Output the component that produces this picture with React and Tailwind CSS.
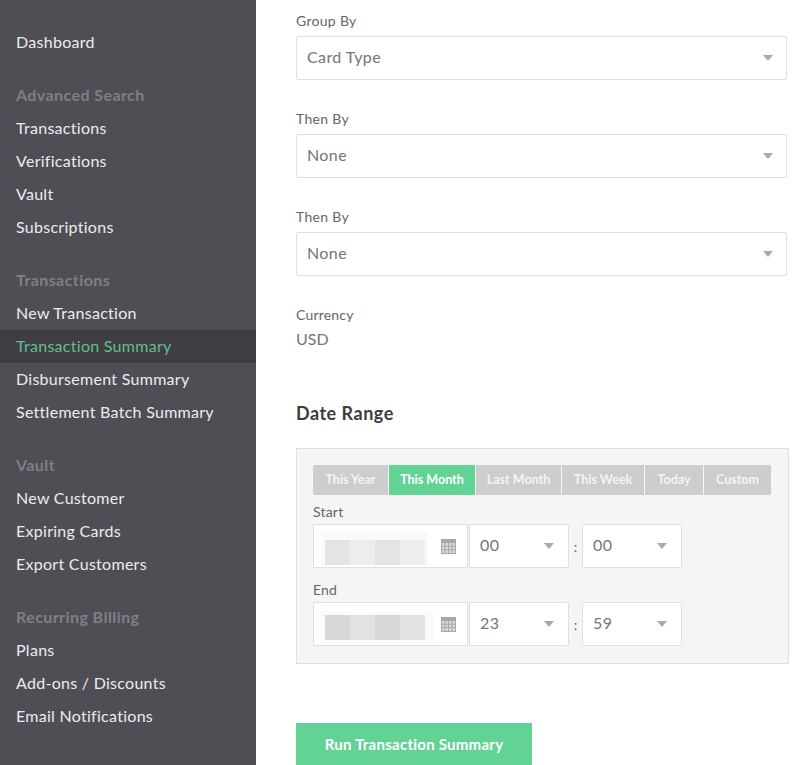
const sections = [
  { items: ['Dashboard'] },
  { title: 'Advanced Search', items: ['Transactions', 'Verifications', 'Vault', 'Subscriptions'] },
  { title: 'Transactions', items: ['New Transaction', 'Transaction Summary', 'Disbursement Summary', 'Settlement Batch Summary'] },
  { title: 'Vault', items: ['New Customer', 'Expiring Cards', 'Export Customers'] },
  { title: 'Recurring Billing', items: ['Plans', 'Add-ons / Discounts', 'Email Notifications'] },
]

const tabs = [
  { label: 'This Year', w: 'w-[75px]' },
  { label: 'This Month', w: 'w-[86px]', active: true },
  { label: 'Last Month', w: 'w-[85px]' },
  { label: 'This Week', w: 'w-[82px]' },
  { label: 'Today', w: 'w-[58px]' },
  { label: 'Custom', w: 'w-[67px]' },
]

function Caret() {
  return <span className="w-0 h-0 border-x-[5px] border-x-transparent border-t-[6px] border-t-[#a9a9a9]" />
}

function Select({ value, className }) {
  return (
    <div className={"h-11 flex items-center justify-between bg-white border border-[#dfdfdf] rounded-[2px] text-[16px] tracking-[0.4px] text-[#757575] " + className}>
      <span className="pb-[2px]">{value}</span>
      <Caret />
    </div>
  )
}

function Field({ label, value }) {
  return (
    <div>
      <div className="h-[24px] leading-[24px] text-[14px] tracking-[0.3px] text-[#666]">{label}</div>
      <Select value={value} className="mt-[3px] pl-[10px] pr-[13px]" />
    </div>
  )
}

function CalendarIcon() {
  return (
    <svg width="15" height="15" viewBox="0 0 15 15" className="shrink-0 self-center">
      <rect width="15" height="15" fill="#a8a8a8" />
      <path d="M1 4h13v10H1z" fill="#d9d9d9" />
      <path d="M4 4v10M7.5 4v10M11 4v10M1 7.2h13M1 10.6h13" stroke="#a8a8a8" strokeWidth="1" />
    </svg>
  )
}

function DateRow({ label, hour, minute, dark }) {
  const a = dark ? 'bg-[#d8d8d8]' : 'bg-[#e4e4e4]'
  const b = dark ? 'bg-[#e2e2e2]' : 'bg-[#ededed]'
  return (
    <div>
      <div className="h-[24px] leading-[24px] text-[14px] tracking-[0.2px] text-[#666]">{label}</div>
      <div className="flex items-center">
        <div className="w-[155px] h-11 bg-white border border-[#dfdfdf] flex items-start justify-between pr-[11px]">
          <div className={"flex bg-[#fafafa] " + (dark ? 'ml-[6px] mt-[9px] pl-[5px] pr-[8px] pt-[3px] pb-[4px]' : 'ml-[7px] mt-[6px] pl-[4px] pr-[3px] pt-[9px]')}>
            <div className={"w-[25px] h-[25px] " + a} />
            <div className={"w-[25px] h-[25px] " + b} />
            <div className={"w-[25px] h-[25px] " + a} />
            <div className={"w-[25px] h-[25px] " + b} />
          </div>
          <CalendarIcon />
        </div>
        <Select value={hour} className="w-[100px] ml-[1px] pl-[10px] pr-[14px]" />
        <span className="w-[13px] text-center text-[14px] text-[#666]">:</span>
        <Select value={minute} className="w-[100px] pl-[10px] pr-[14px]" />
      </div>
    </div>
  )
}

export default function App() {
  return (
    <div className="w-[794px] h-[765px] overflow-hidden flex bg-white font-['Lato','Noto_Sans',sans-serif]">
      <aside className="w-[256px] shrink-0 bg-[#4f4e54] pt-[26px]">
        {sections.map((s, i) => (
          <div key={i} className="mb-[20px]">
            {s.title && <div className="h-[33px] leading-[31px] px-4 text-[16px] tracking-[0.42px] font-bold text-[#807f84]">{s.title}</div>}
            {s.items.map(item => {
              const active = item === 'Transaction Summary'
              return (
                <div key={item} className={"h-[33px] leading-[31px] px-4 text-[16px] tracking-[0.28px] " + (active ? 'bg-[#3f3d43] text-[#5fc08e]' : 'text-[#ececee]')}>
                  {item}
                </div>
              )
            })}
          </div>
        ))}
      </aside>

      <main className="flex-1 pl-[40px] pt-[9px]">
        <div className="w-[491px] flex flex-col gap-[27px]">
          <Field label="Group By" value="Card Type" />
          <Field label="Then By" value="None" />
          <Field label="Then By" value="None" />
        </div>
        <div className="mt-[27px] h-[24px] leading-[24px] text-[14px] tracking-[0.2px] text-[#666]">Currency</div>
        <div className="h-[24px] leading-[24px] text-[16px] text-[#757575]">USD</div>
        <h2 className="mt-[50px] h-[24px] leading-[24px] text-[18px] tracking-[0.5px] font-bold text-[#3d3d3d]">Date Range</h2>
        <div className="mt-[23px] w-[493px] h-[216px] bg-[#f5f5f5] border border-[#dfdfdf] px-4 pt-4">
          <div className="flex gap-px">
            {tabs.map((t, i) => (
              <div
                key={t.label}
                className={"h-[30px] flex items-center justify-center text-[12.5px] font-bold " + t.w + " " +
                  (t.active ? 'bg-[#62d295] text-white' : 'bg-[#cdcdcd] text-[#f4f4f4]') +
                  (i === 0 ? ' rounded-l-[2px]' : '') + (i === tabs.length - 1 ? ' rounded-r-[2px]' : '')}
              >
                {t.label}
              </div>
            ))}
          </div>
          <div className="mt-[5px]">
            <DateRow label="Start" hour="00" minute="00" />
          </div>
          <div className="mt-[10px]">
            <DateRow label="End" hour="23" minute="59" dark />
          </div>
        </div>
        <div className="mt-[59px] w-[236px] h-[42px] bg-[#62d295] flex items-center justify-center text-[15px] tracking-[0.25px] font-bold text-white">
          Run Transaction Summary
        </div>
      </main>
    </div>
  )
}
